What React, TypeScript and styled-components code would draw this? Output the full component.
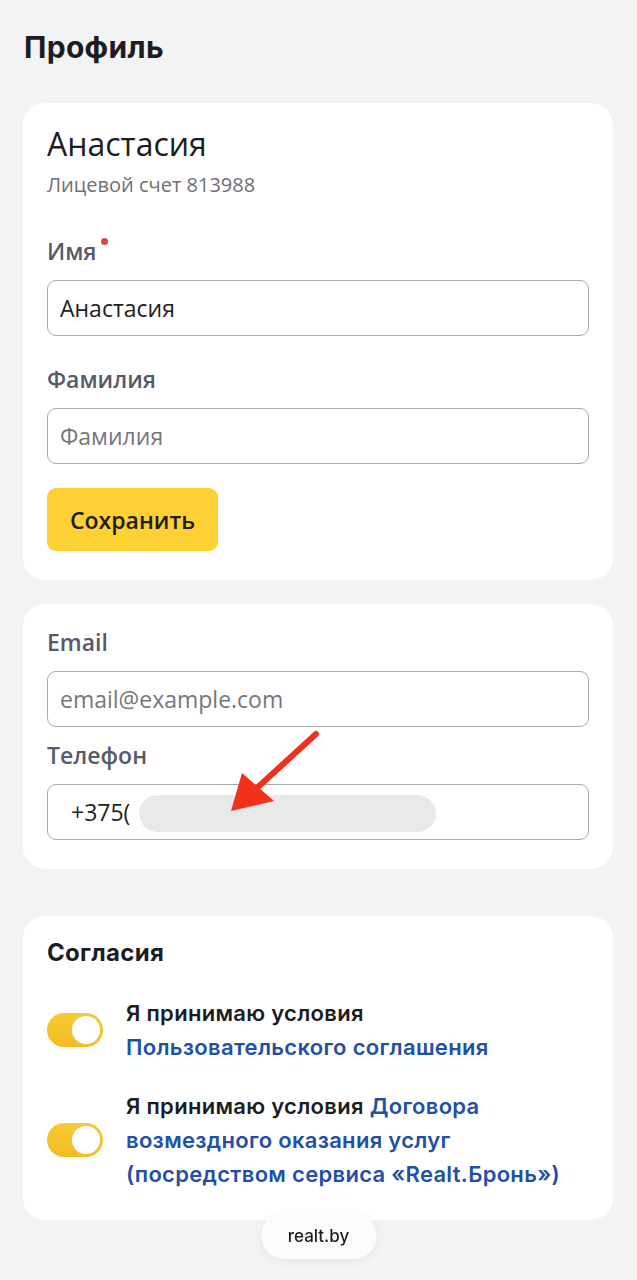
import styled, { createGlobalStyle } from 'styled-components';

const GlobalStyle = createGlobalStyle`
  html, body {
    margin: 0;
    padding: 0;
    background: #f2f3f5;
  }
  * {
    box-sizing: border-box;
  }
`;

const Page = styled.div`
  min-height: 1280px;
  padding: 29px 24px 60px 23px;
  background: #f2f3f5;
  font-family: 'Open Sans', 'Liberation Sans', sans-serif;
`;

const Title = styled.h1`
  margin: 0 0 38px 1px;
  font-family: Inter, 'Liberation Sans', sans-serif;
  font-size: 30px;
  line-height: 36px;
  font-weight: 700;
  letter-spacing: 0.3px;
  color: #1d1d1f;
`;

const Card = styled.section<{ $gap?: number }>`
  display: flex;
  flex-direction: column;
  background: #fff;
  border-radius: 22px;
  padding: 24px 24px 29px;
  margin-bottom: ${(p) => p.$gap ?? 24}px;
`;

const UserName = styled.div`
  margin-top: -3px;
  font-size: 32px;
  line-height: 40px;
  color: #1d1d1f;
`;

const Account = styled.div`
  margin-top: 9px;
  font-size: 20px;
  line-height: 24px;
  color: #6f7075;
`;

const Label = styled.label<{ $top: number }>`
  position: relative;
  display: inline-block;
  align-self: flex-start;
  margin-top: ${(p) => p.$top}px;
  margin-bottom: 15px;
  font-size: 23px;
  line-height: 28px;
  font-weight: 600;
  color: #575a68;
`;

const Required = styled.span`
  position: absolute;
  right: -11px;
  top: 1px;
  width: 7px;
  height: 7px;
  border-radius: 50%;
  background: #de4640;
`;

const FieldBox = styled.div<{ $pad?: number }>`
  position: relative;
  display: flex;
  align-items: center;
  height: 56px;
  padding: 0 ${(p) => p.$pad ?? 12}px;
  border: 1.5px solid #a9aaae;
  border-radius: 9px;
  background: #fff;
  font-size: 23px;
  color: #222;
`;

const Placeholder = styled.span`
  color: #76777c;
`;

const Redaction = styled.span`
  position: absolute;
  left: 91px;
  top: 10px;
  width: 297px;
  height: 37px;
  border-radius: 19px;
  background: #e9e9ea;
`;

const Arrow = styled.svg`
  position: absolute;
  left: 180px;
  top: -54px;
  overflow: visible;
`;

const SaveButton = styled.button`
  align-self: flex-start;
  margin-top: 24px;
  height: 63px;
  padding: 0 23px;
  border: none;
  border-radius: 9px;
  background: #fdd033;
  font-family: 'Open Sans', 'Liberation Sans', sans-serif;
  font-size: 23px;
  font-weight: 600;
  color: #1d1d1f;
`;

const SectionTitle = styled.h2`
  margin: -2px 0 28px;
  font-family: Inter, 'Liberation Sans', sans-serif;
  font-size: 24px;
  line-height: 30px;
  font-weight: 700;
  letter-spacing: 0.3px;
  color: #1d1d1f;
`;

const ConsentRow = styled.div`
  display: flex;
  align-items: center;
  gap: 23px;
  & + & {
    margin-top: 25px;
  }
`;

const Toggle = styled.span`
  position: relative;
  flex: none;
  width: 56px;
  height: 34px;
  border-radius: 17px;
  background: linear-gradient(180deg, #f8ca35, #f2bd22);
  &::after {
    content: '';
    position: absolute;
    right: 3px;
    top: 3px;
    width: 28px;
    height: 28px;
    border-radius: 50%;
    background: #fff;
    box-shadow: 0 0 0 1px #f0c54a;
  }
`;

const ConsentText = styled.p`
  margin: 0;
  font-family: Inter, 'Liberation Sans', sans-serif;
  font-size: 22px;
  line-height: 34px;
  font-weight: 600;
  letter-spacing: 0.3px;
  color: #1d1d1f;
`;

const DocLink = styled.a`
  color: #2150a6;
  text-decoration: none;
`;

const SiteBadge = styled.div`
  position: fixed;
  left: 50%;
  bottom: 21px;
  transform: translateX(-50%);
  width: 115px;
  height: 46px;
  display: flex;
  align-items: center;
  justify-content: center;
  border-radius: 23px;
  background: #fcfcfd;
  box-shadow: 0 2px 12px rgba(0, 0, 0, 0.06);
  font-family: Inter, 'Liberation Sans', sans-serif;
  font-size: 17px;
  font-weight: 500;
  color: #1d1d1f;
`;

export default function App() {
  return (
    <>
      <GlobalStyle />
      <Page>
        <Title>Профиль</Title>

        <Card>
          <UserName>Анастасия</UserName>
          <Account>Лицевой счет 813988</Account>
          <Label $top={40}>
            Имя
            <Required />
          </Label>
          <FieldBox>Анастасия</FieldBox>
          <Label $top={29}>Фамилия</Label>
          <FieldBox>
            <Placeholder>Фамилия</Placeholder>
          </FieldBox>
          <SaveButton>Сохранить</SaveButton>
        </Card>

        <Card $gap={47}>
          <Label $top={0}>Email</Label>
          <FieldBox>
            <Placeholder>email@example.com</Placeholder>
          </FieldBox>
          <Label $top={14}>Телефон</Label>
          <FieldBox $pad={23}>
            +375(
            <Redaction />
            <Arrow width="100" height="100" viewBox="0 0 100 100">
              <line x1="88" y1="3" x2="30" y2="56" stroke="#f2301c" strokeWidth="6" strokeLinecap="round" />
              <polygon points="3,80 14,42 46,70" fill="#f2301c" />
            </Arrow>
          </FieldBox>
        </Card>

        <Card>
          <SectionTitle>Согласия</SectionTitle>
          <ConsentRow>
            <Toggle />
            <ConsentText>
              Я принимаю условия
              <br />
              <DocLink href="#">Пользовательского соглашения</DocLink>
            </ConsentText>
          </ConsentRow>
          <ConsentRow>
            <Toggle />
            <ConsentText>
              Я принимаю условия{' '}
              <DocLink href="#">
                Договора
                <br />
                возмездного оказания услуг
                <br />
                (посредством сервиса «Realt.Бронь»)
              </DocLink>
            </ConsentText>
          </ConsentRow>
        </Card>
      </Page>
      <SiteBadge>realt.by</SiteBadge>
    </>
  );
}
